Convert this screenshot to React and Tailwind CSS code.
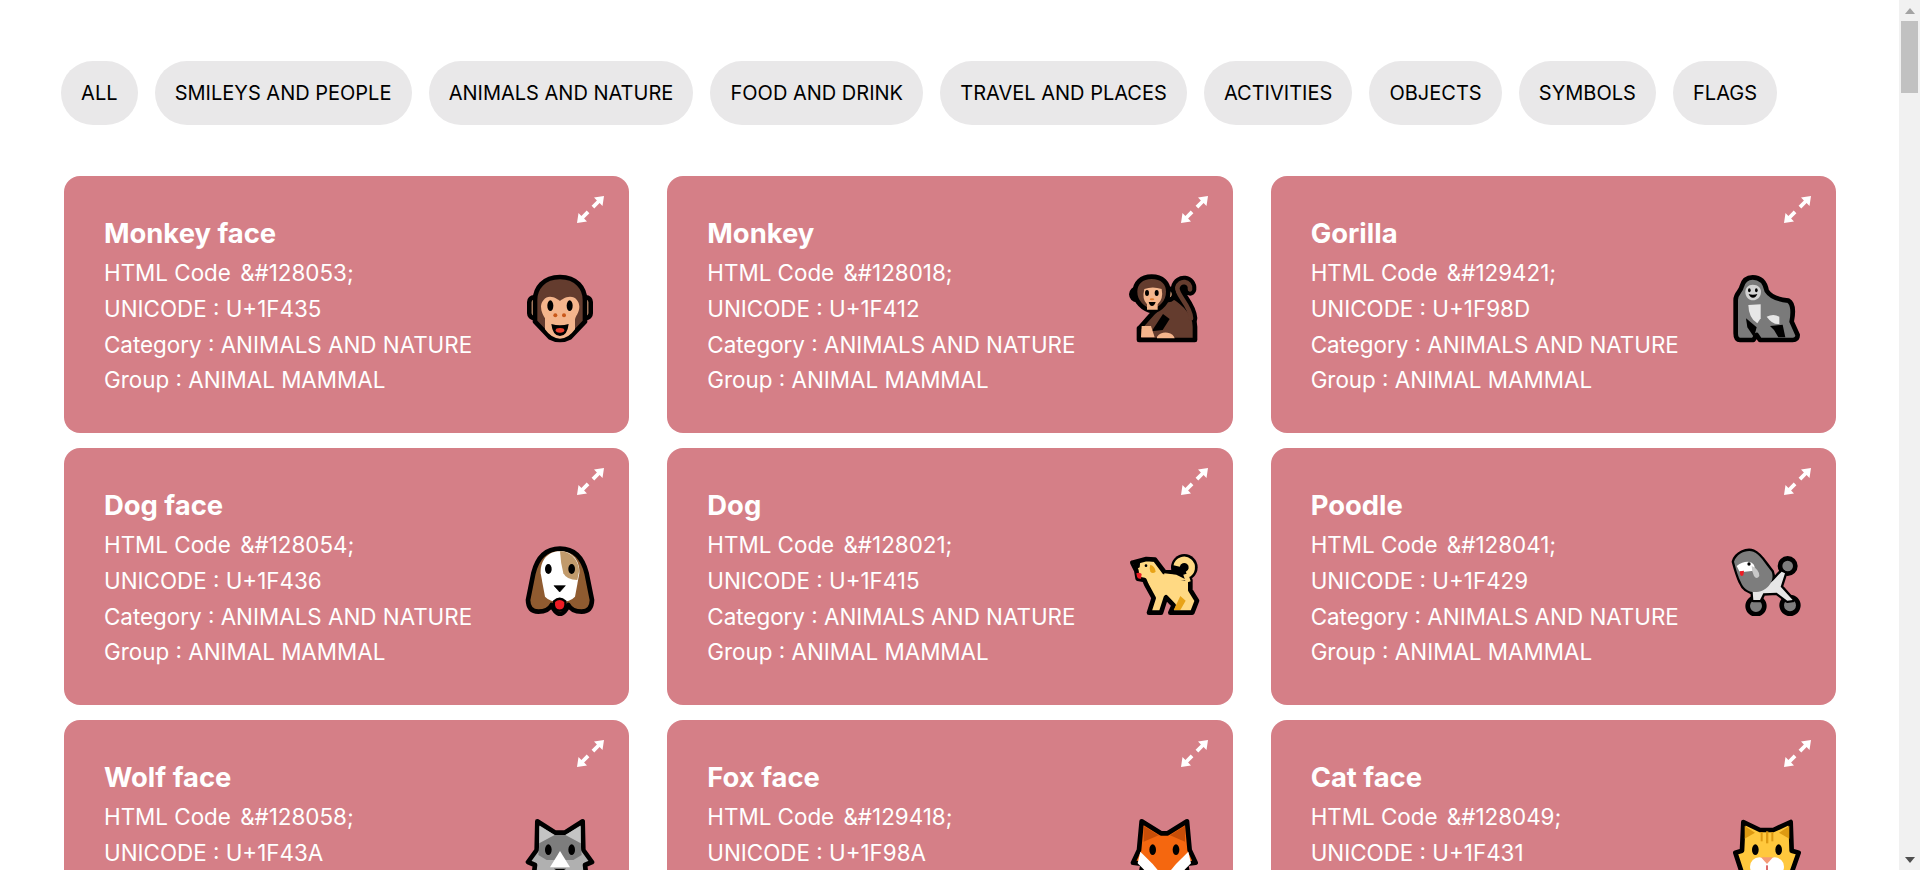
import React from "react";

const S = { stroke: "#000", strokeWidth: 14, strokeLinejoin: "round", strokeLinecap: "round" };

const MonkeyFace = () => (
  <>
    <rect x="88" y="142" width="38" height="62" rx="14" fill="#f4b58c" {...S} />
    <rect x="234" y="142" width="38" height="62" rx="14" fill="#f4b58c" {...S} />
    <path d="M180 81C130 81 105 115 105 150L105 215L150 262Q180 278 210 262L255 215L255 150C255 115 230 81 180 81Z" fill="#643c2e" {...S} />
    <path d="M150 140C165 140 175 150 180 152C185 150 195 140 210 140C228 140 238 155 238 170C238 190 225 198 225 210L225 238Q205 266 180 266Q155 266 135 238L135 205C130 195 123 185 123 170C123 155 135 140 150 140Z" fill="#f4b58c" />
    <ellipse cx="151" cy="167" rx="9" ry="16" fill="#000" />
    <ellipse cx="209" cy="167" rx="9" ry="16" fill="#000" />
    <circle cx="166" cy="196" r="6" fill="#c9581a" />
    <circle cx="192" cy="196" r="6" fill="#c9581a" />
    <path d="M154 222Q180 230 206 222Q202 258 180 258Q158 258 154 222Z" fill="#000" />
    <ellipse cx="180" cy="241" rx="13" ry="7" fill="#e8402c" />
  </>
);

const Monkey = () => (
  <>
    <path d="M237 118C240 92 205 88 199 113C196 135 238 165 240 205" fill="none" stroke="#000" strokeWidth="38" strokeLinecap="round" />
    <path d="M165 130C205 145 252 185 252 230L252 270L84 270L84 235C95 225 110 205 130 185Z" fill="#643c2e" {...S} />
    <path d="M237 118C240 92 205 88 199 113C196 135 238 165 240 205" fill="none" stroke="#643c2e" strokeWidth="14" strokeLinecap="round" />
    <path d="M156 192L176 207L155 240L122 244Z" fill="#000" />
    <circle cx="78" cy="133" r="17" fill="#f4b58c" {...S} />
    <circle cx="172" cy="133" r="17" fill="#f4b58c" {...S} />
    <path d="M122 80C155 80 172 100 172 125C172 155 150 178 125 184C95 178 72 155 72 125C72 100 90 80 122 80Z" fill="#643c2e" {...S} />
    <path d="M100 117Q125 108 152 117Q158 148 140 163L140 179L108 179L108 163Q92 148 100 117Z" fill="#f4b58c" />
    <ellipse cx="108" cy="129" rx="6" ry="9" fill="#000" />
    <ellipse cx="137" cy="129" rx="6" ry="9" fill="#000" />
    <ellipse cx="123" cy="148" rx="7" ry="3" fill="#e07a2c" />
    <path d="M113 156L134 156Q130 168 123 168Q116 168 113 156Z" fill="#000" />
    <path d="M92 228L120 228L131 262L90 262Z" fill="#f4b58c" />
    <path d="M138 260Q150 245 170 248Q188 252 191 265L138 265Z" fill="#f4b58c" />
  </>
);

const Gorilla = () => (
  <>
    <path d="M128 82C150 82 165 95 170 122C185 145 215 150 235 152C250 160 250 190 245 215L263 255Q263 270 248 270L150 270L140 255L130 270L90 270Q77 270 77 250L77 150C77 130 92 125 95 110C100 90 110 82 128 82Z" fill="#7a7a7a" {...S} />
    <path d="M128 104C145 104 153 114 153 126C153 142 140 151 129 151C116 151 106 140 106 126C106 114 114 104 128 104Z" fill="#d2d2d2" />
    <ellipse cx="118" cy="121" rx="4" ry="6" fill="#000" />
    <ellipse cx="139" cy="121" rx="4" ry="6" fill="#000" />
    <path d="M116 132Q128 137 142 132Q138 143 129 143Q120 143 116 132Z" fill="#000" />
    <path d="M115 165L152 163L152 205L142 220Q116 205 115 165Z" fill="#e6e6e6" />
    <path d="M170 200Q190 190 208 200L208 222Q188 225 170 200Z" fill="#e6e6e6" />
    <path d="M108 205L140 232L132 262L112 232Z" fill="#000" />
    <path d="M180 228L218 224L226 262L205 262L192 240Z" fill="#000" />
  </>
);

const DogFace = () => (
  <>
    <path d="M180 56C130 56 110 90 100 130L84 210Q85 245 115 245Q145 245 155 225Q165 250 180 252Q195 250 205 225Q215 245 245 245Q275 245 276 210L260 130C250 90 230 56 180 56Z" fill="#8f5b30" {...S} />
    <path d="M180 64C140 64 120 95 122 130L135 200Q150 216 180 216Q210 216 225 200L238 130C240 95 220 64 180 64Z" fill="#fff" />
    <path d="M180 64C215 64 238 95 237 125L232 150Q200 150 190 130Q182 100 180 64Z" fill="#c19a6b" />
    <ellipse cx="145" cy="117" rx="10" ry="15" fill="#000" />
    <ellipse cx="215" cy="117" rx="10" ry="15" fill="#000" />
    <path d="M162 167L196 167L179 186Z" fill="#000" stroke="#000" strokeWidth="2" />
    <path d="M162 214Q179 198 196 214Q200 240 179 242Q158 240 162 214Z" fill="#ed1c24" stroke="#000" strokeWidth="7" />
  </>
);

const Dog = () => (
  <>
    <path d="M64 98L106 87L132 89L160 126L196 128L238 150L238 180L258 212L244 248L178 248L188 226L165 202L150 248L114 248L128 204L106 164L100 150L80 146L76 122Z" fill="#ffd983" {...S} />
    <circle cx="220" cy="112" r="40" fill="#000" />
    <path d="M197 108A23 23 0 1 1 228 134" fill="none" stroke="#ffd983" strokeWidth="19" />
    <path d="M224 132L232 156" fill="none" stroke="#ffd983" strokeWidth="15" />
    <path d="M160 130L196 134L228 150L160 160Z" fill="#ffd983" />
    <path d="M64 98L88 92L86 112L76 118Z" fill="#000" />
    <circle cx="105" cy="107" r="4" fill="#000" />
    <path d="M76 130Q85 126 92 132L90 146Q80 148 78 140Z" fill="#ed1c24" />
    <path d="M118 104Q132 108 134 125Q125 133 118 125Q114 113 118 104Z" fill="#e8a317" />
    <path d="M208 198L224 212L208 240L188 240Z" fill="#e8a317" />
  </>
);

const Poodle = () => (
  <>
    <circle cx="233" cy="108" r="23" fill="#7d7d7d" {...S} />
    <circle cx="138" cy="228" r="25" fill="#7d7d7d" {...S} />
    <circle cx="240" cy="226" r="25" fill="#7d7d7d" {...S} />
    <path d="M150 180Q180 165 205 135L215 125L225 130L212 170L248 210L232 212L200 188L160 190L150 210L130 210L128 185Z" fill="#e6e6e6" {...S} />
    <path d="M72 95C80 70 110 58 130 65C150 72 165 100 185 125C195 150 175 182 140 186C115 188 100 175 92 155C85 140 80 125 72 95Z" fill="#7d7d7d" {...S} />
    <path d="M150 180Q180 165 205 135L215 125L225 130L212 170L248 210L232 212L200 188L160 190L150 210L130 210L128 185Z" fill="#e6e6e6" />
    <path d="M72 95C80 70 110 58 130 65C150 72 165 100 185 125C195 150 175 182 140 186C115 188 100 175 92 155C85 140 80 125 72 95Z" fill="#7d7d7d" />
    <path d="M80 108Q105 90 125 98Q138 106 132 122L98 126L88 124Z" fill="#fff" />
    <path d="M125 108Q148 118 148 138Q140 150 132 138Q125 125 125 108Z" fill="#c8c8c8" />
    <circle cx="117" cy="102" r="5" fill="#000" />
    <path d="M90 124L102 122L100 136Q92 142 90 132Z" fill="#ed1c24" />
  </>
);

const Wolf = () => (
  <>
    <path d="M112 94L166 128L194 128L248 94L250 180L276 216L255 225L258 250L102 250L105 225L84 216L110 180Z" fill="#b0b0b0" {...S} />
    <path d="M118 108L164 135L118 160Z" fill="#c4c4c4" />
    <path d="M242 108L196 135L242 160Z" fill="#c4c4c4" />
    <path d="M118 160L164 135L196 135L242 160L245 195L220 210L140 210L115 195Z" fill="#7d7d7d" />
    <ellipse cx="145" cy="179" rx="10" ry="16" fill="#000" />
    <ellipse cx="215" cy="179" rx="10" ry="16" fill="#000" />
    <path d="M180 183L210 232L150 232Z" fill="#fff" />
    <path d="M162 236L198 236L180 248Z" fill="#000" />
  </>
);

const Fox = () => (
  <>
    <path d="M92 94L150 130L170 130L228 94L236 180L254 218L225 222L230 250L90 250L95 222L66 218L84 180Z" fill="#f5670f" {...S} />
    <path d="M98 108L143 136L98 155Z" fill="#c84e08" />
    <path d="M222 108L177 136L222 155Z" fill="#c84e08" />
    <path d="M88 185L125 222L140 240L100 240L80 220Z" fill="#fff" />
    <path d="M232 185L195 222L180 240L220 240L240 220Z" fill="#fff" />
    <ellipse cx="125" cy="179" rx="10" ry="16" fill="#000" />
    <ellipse cx="195" cy="179" rx="10" ry="16" fill="#000" />
  </>
);

const Cat = () => (
  <>
    <path d="M100 96L150 120L190 120L242 96L245 182L266 188L240 262L100 262L76 188L96 182Z" fill="#ffc83d" {...S} />
    <path d="M104 108L135 128L104 146Z" fill="#dd9a12" />
    <path d="M238 108L207 128L238 146Z" fill="#dd9a12" />
    <rect x="152" y="126" width="6" height="28" fill="#dd9a12" />
    <rect x="168" y="124" width="7" height="36" fill="#dd9a12" />
    <rect x="184" y="126" width="6" height="28" fill="#dd9a12" />
    <ellipse cx="136" cy="179" rx="10" ry="16" fill="#000" />
    <ellipse cx="206" cy="179" rx="10" ry="16" fill="#000" />
    <circle cx="148" cy="230" r="28" fill="#fff" />
    <circle cx="194" cy="230" r="28" fill="#fff" />
    <path d="M153 202L189 202L171 222Z" fill="#f59a76" />
    <rect x="169" y="226" width="4" height="14" fill="#c22" />
  </>
);

const ExpandIcon = () => (
  <svg width="27" height="27" viewBox="0 0 27 27" className="block" fill="#fff">
    <path d="M27 0L25.5 10L22.6 7.1L17.3 12.4L14.6 9.7L19.9 4.4L17 1.5Z" />
    <path d="M0 27L1.5 17L4.4 19.9L9.7 14.6L12.4 17.3L7.1 22.6L10 25.5Z" />
  </svg>
);

const cards = [
  { t: "Monkey face", h: "128053", u: "1F435", vb: "72 66 216 216", E: MonkeyFace },
  { t: "Monkey", h: "128018", u: "1F412", vb: "51 66 216 216", E: Monkey },
  { t: "Gorilla", h: "129421", u: "1F98D", vb: "63 66 216 216", E: Gorilla },
  { t: "Dog face", h: "128054", u: "1F436", vb: "72 42 216 216", E: DogFace },
  { t: "Dog", h: "128021", u: "1F415", vb: "51 42 216 216", E: Dog },
  { t: "Poodle", h: "128041", u: "1F429", vb: "63 42 216 216", E: Poodle },
  { t: "Wolf face", h: "128058", u: "1F43A", vb: "72 78 216 216", E: Wolf },
  { t: "Fox face", h: "129418", u: "1F98A", vb: "51 78 216 216", E: Fox },
  { t: "Cat face", h: "128049", u: "1F431", vb: "63 78 216 216", E: Cat },
];

const pills = ["ALL", "SMILEYS AND PEOPLE", "ANIMALS AND NATURE", "FOOD AND DRINK", "TRAVEL AND PLACES", "ACTIVITIES", "OBJECTS", "SYMBOLS", "FLAGS"];

export default function App() {
  return (
    <div className="flex h-[870px] overflow-hidden bg-white font-['Inter',sans-serif]">
      <main className="w-[1899px] shrink-0 pt-[61px]">
        <div className="flex gap-[17px] pl-[61px]">
          {pills.map((p) => (
            <button key={p} className="h-[64px] rounded-[32px] bg-[#e9e8e9] px-[20.1px] text-[20px] text-black whitespace-nowrap">
              {p}
            </button>
          ))}
        </div>
        <div className="mt-[51px] grid grid-cols-3 gap-x-[38px] gap-y-[15px] pl-[64px] pr-[63px]">
          {cards.map(({ t, h, u, vb, E }) => (
            <div key={t} className="relative flex h-[257px] items-center justify-between rounded-[16px] bg-[#d57f87] pl-[40px] pr-[33px] text-white">
              <div className="pt-[2px] text-[22.4px] leading-[35.84px]">
                <h2 className="mb-[2px] text-[27.4px] font-bold leading-[40px]">{t}</h2>
                <p>HTML Code <span className="ml-[3px]">&amp;#{h};</span></p>
                <p>UNICODE : U+{u}</p>
                <p>Category : ANIMALS AND NATURE</p>
                <p>Group : ANIMAL MAMMAL</p>
              </div>
              <svg width="72" height="72" viewBox={vb} className="mt-[7px] shrink-0">
                <E />
              </svg>
              <div className="absolute right-[25px] top-[20px]">
                <ExpandIcon />
              </div>
            </div>
          ))}
        </div>
      </main>
      <aside className="flex w-[21px] shrink-0 flex-col items-center bg-[#f1f1f1]">
        <div className="flex h-[21px] w-full items-center justify-center">
          <svg width="10" height="6" viewBox="0 0 10 6"><path d="M5 0L10 6H0Z" fill="#a3a3a3" /></svg>
        </div>
        <div className="h-[72px] w-[17px] bg-[#c1c1c1]" />
        <div className="flex-1" />
        <div className="flex h-[21px] w-full items-center justify-center">
          <svg width="10" height="6" viewBox="0 0 10 6"><path d="M5 6L0 0H10Z" fill="#505050" /></svg>
        </div>
      </aside>
    </div>
  );
}
